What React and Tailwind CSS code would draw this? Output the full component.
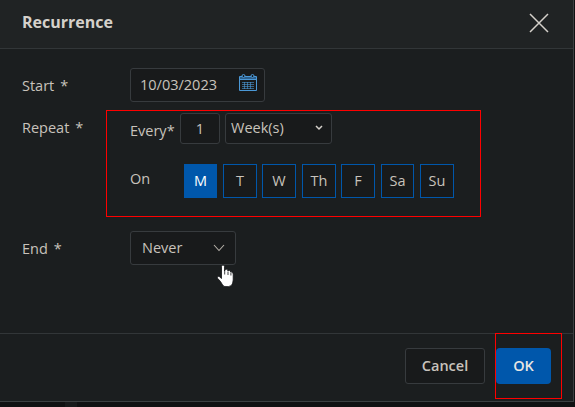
import React from "react";

const days = [
  ["M", "w-[33px] bg-[#0057ab] text-white mr-[6px]"],
  ["T", "w-[34px] bg-[#181a1b] mr-[5px]"],
  ["W", "w-[34px] bg-[#181a1b] mr-[6px]"],
  ["Th", "w-[34px] bg-[#181a1b] mr-[5px]"],
  ["F", "w-[34px] bg-[#181a1b] mr-[6px]"],
  ["Sa", "w-[33px] bg-[#181a1b] mr-[6px]"],
  ["Su", "w-[34px] bg-[#181a1b]"],
];

const field = "flex items-center rounded-[3px] border border-[#373b3e] bg-[#181a1b]";

function Label({ children, className }) {
  return (
    <span className={className}>
      {children}
      <span className="ml-[6px]">*</span>
    </span>
  );
}

function CalendarIcon() {
  return (
    <svg className="mb-1" width="18" height="18" viewBox="0 0 18 18" fill="none" stroke="#4b98d6">
      <path d="M.5 2.500h17v14H.5z" />
      <path d="M1 3.500h16M1 4.500h16" stroke="#2c5f8c" />
      <path d="M1 5.500h16" />
      <circle cx="4.500" cy="2" r="1.500" fill="#181a1b" />
      <circle cx="13.500" cy="2" r="1.500" fill="#181a1b" />
      <path d="M3 8.500h12M3 10.500h12M3 12.500h12M3 14.500h12M5.500 8v7M8.500 8v7M11.500 8v7" strokeWidth=".6" />
    </svg>
  );
}

function HandCursor() {
  return (
    <svg className="absolute left-[216px] top-[264px]" width="19" height="25" viewBox="0 0 19 25">
      <path
        d="M5.500 2.500Q5.500 1 7 1T8.500 2.500V7Q9 5 10.500 5.300T12 7Q13 5.500 14 6.500L14.700 8Q16.800 7 17.200 10V16Q17 19.500 15.400 21.500Q13 23.300 8 22.400Q6 20.500 4.500 17.500L1.300 14Q.8 12 3 12.300L5.500 14.500Z"
        fill="#fff"
        stroke="#101214"
        strokeWidth=".8"
      />
      <path d="M8.700 6.500v4M12 7.500v3.500M14.900 8.500v3" stroke="#101214" strokeWidth=".8" />
    </svg>
  );
}

export default function App() {
  return (
    <div className="relative h-[407px] w-[575px] overflow-hidden bg-[#101112] font-['Open_Sans',sans-serif] text-[14.5px] leading-5 text-[#c8c3bc]">
      <div className="flex h-[402px] w-[574px] flex-col border-r border-b border-[#3b3f41] bg-[#1b1e1f]">
        <header className="flex h-[49px] shrink-0 items-center justify-between border-b border-[#323638] bg-[#202324] pr-6 pb-1 pl-[22px]">
          <h1 className="text-base font-bold text-[#d5d1cb]">Recurrence</h1>
          <svg className="mt-[2px]" width="20" height="20" viewBox="0 0 20 20" stroke="#d5d1cb" strokeWidth="1.500">
            <path d="M1 1l18 18M19 1L1 19" />
          </svg>
        </header>
        <main className="flex grow flex-col pt-[19px] pl-[22px]">
          <div className="flex h-[34px] items-center">
            <Label className="w-[108px] pt-[2px]">Start</Label>
            <div className={`${field} h-[34px] w-[135px] justify-between pr-[7px] pl-[9px]`}>
              <span>10/03/2023</span>
              <CalendarIcon />
            </div>
          </div>
          <div className="mt-2 flex">
            <Label className="w-[84px] pt-2">Repeat</Label>
            <div className="h-[107px] w-[375px] border border-[#ff0000] pt-[2px] pl-[23px]">
              <div className="flex h-[31px]">
                <span className="w-[50px] pt-2">Every*</span>
                <div className={`${field} w-10 justify-center`}>1</div>
                <div className={`${field} ml-[5px] w-[107px] justify-between pr-2 pb-[2px] pl-[5px]`}>
                  <span>Week(s)</span>
                  <svg className="mt-px" width="8" height="6" viewBox="0 0 8 6" fill="none" stroke="#d5d1cb" strokeWidth="1.500">
                    <path d="M1 1l3 3 3-3" />
                  </svg>
                </div>
              </div>
              <div className="mt-5 flex h-[34px]">
                <span className="w-[54px] pt-[5px]">On</span>
                {days.map(([name, style]) => (
                  <div key={name} className={`flex h-[34px] items-center justify-center border border-[#0057ab] ${style}`}>
                    {name}
                  </div>
                ))}
              </div>
            </div>
          </div>
          <div className="mt-[14px] flex h-[34px] items-center">
            <Label className="w-[108px] pt-[2px]">End</Label>
            <div className={`${field} h-[34px] w-[106px] justify-between pr-[10px] pl-[11px]`}>
              <span>Never</span>
              <svg width="12" height="8" viewBox="0 0 12 8" fill="none" stroke="#b5b0a8" strokeWidth="1.100">
                <path d="M1 1l5 5.500 5-5.500" />
              </svg>
            </div>
          </div>
        </main>
        <footer className="flex h-[68px] shrink-0 items-start justify-end gap-[11px] border-t border-[#323638] pt-[14px] pr-[22px]">
          <button className={`${field} h-9 w-20 justify-center font-semibold`}>Cancel</button>
          <button className="h-9 w-[55px] rounded-[4px] bg-[#0057ab] font-semibold text-[#e8e6e3]">OK</button>
        </footer>
      </div>
      <div className="ml-[65px] h-[5px] w-3 bg-[#181a1b]" />
      <div className="absolute top-[333px] left-[495px] h-[66px] w-[67px] border border-[#ff0000]" />
      <HandCursor />
    </div>
  );
}
